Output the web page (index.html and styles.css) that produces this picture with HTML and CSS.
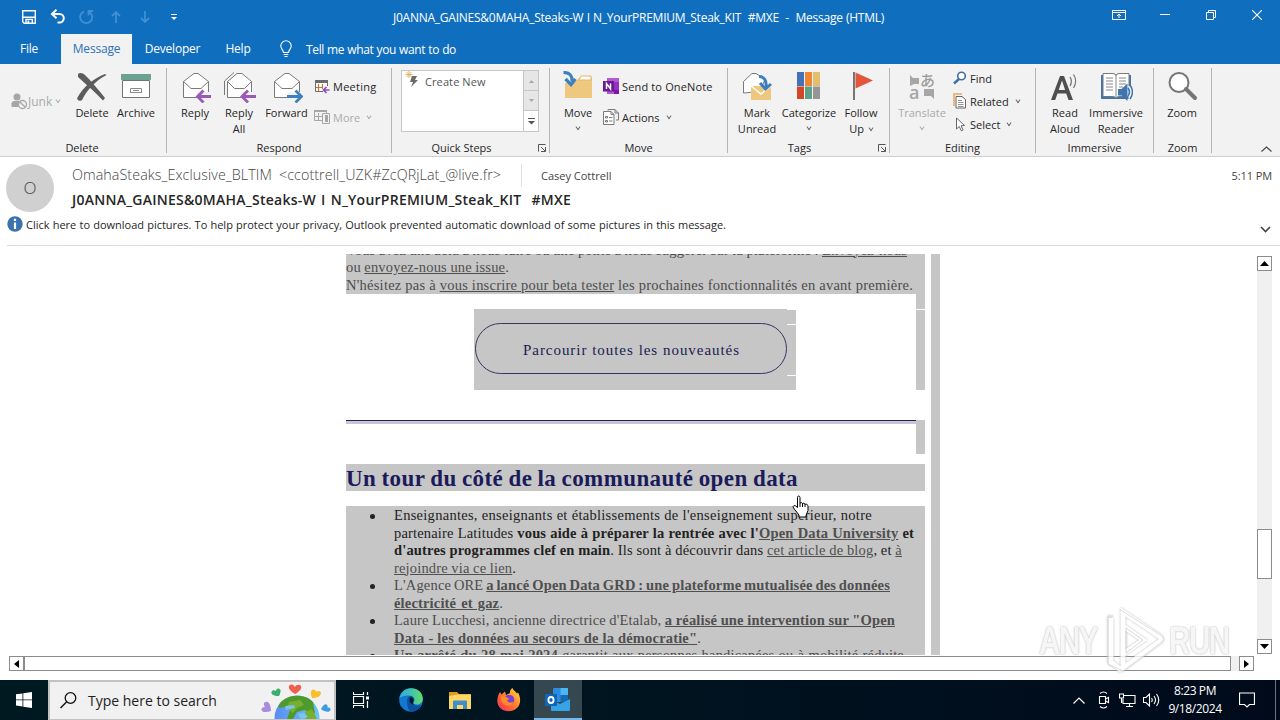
FILE: index.html
```html
<!doctype html>
<html lang="en">
  <head>
    <meta charset="UTF-8" />
    <title>J0ANNA_GAINES&amp;0MAHA_Steaks - Message (HTML)</title>
    <link rel="stylesheet" href="styles.css">
  </head>
  <body>
    <!-- Title bar -->
    <header class="titlebar">
      <div class="quick-access">
        <svg width="16" height="16" viewBox="0 0 16 16"><path d="M1.700 1.700h12.600v12.600H3.200l-1.500-1.500zM2 8.200h12M5 14v-3.600h6.300V14" fill="none" stroke="#fff" stroke-width="1.400" /><path d="M6.500 11.500h1.800V14H6.500z" fill="#fff" /></svg>
        <svg width="16" height="16" viewBox="0 0 16 16"><path d="M6.500 .8L2 5l4.500 4.200M2.300 5h7.200a4.300 4.300 0 0 1 0 8.600H7.500" fill="none" stroke="#fff" stroke-width="2" /></svg>
        <svg width="16" height="16" viewBox="0 0 16 16"><path d="M9 2h5M9.500 1.500v5M10 2.800A6 6 0 1 1 5 2.500" fill="none" stroke="#3f8fd2" stroke-width="1.900" /></svg>
        <svg width="16" height="16" viewBox="0 0 16 16"><path d="M8 14V3M4 7l4-4 4 4" fill="none" stroke="#3f8fd2" stroke-width="1.800" /></svg>
        <svg width="16" height="16" viewBox="0 0 16 16"><path d="M8 2v11M4 9l4 4 4-4" fill="none" stroke="#3f8fd2" stroke-width="1.800" /></svg>
        <svg width="16" height="16" viewBox="0 0 16 16"><path d="M5 5.500h6" stroke="#fff" /><path d="M5 8h6L8 11z" fill="#fff" /></svg>
      </div>
      <h1 class="window-title">J0ANNA_GAINES&amp;0MAHA_Steaks-W I N_YourPREMIUM_Steak_KIT&nbsp; #MXE&nbsp; -&nbsp; Message (HTML)</h1>
      <div class="window-controls">
        <svg width="14" height="12" viewBox="0 0 14 12"><path d="M.5 1.500h13v9H.5zM.5 3.500h13M7 9V5M5 7l2-2 2 2" fill="none" stroke="#fff" /></svg>
        <svg width="10" height="10" viewBox="0 0 10 10"><path d="M0 4.500h10" stroke="#fff" /></svg>
        <svg width="10" height="10" viewBox="0 0 10 10"><path d="M.5 2.500h7v7h-7zM2.500 2.500v-2h7v7h-2" fill="none" stroke="#fff" /></svg>
        <svg width="10" height="10" viewBox="0 0 10 10"><path d="M0 0l10 10M10 0L0 10" stroke="#fff" stroke-width="1.100" /></svg>
      </div>
    </header>

    <nav class="tabs">
      <span class="tab tab-file">File</span>
      <span class="tab tab-message is-active">Message</span>
      <span class="tab tab-developer">Developer</span>
      <span class="tab tab-help">Help</span>
      <svg class="bulb" width="12" height="18" viewBox="0 0 12 18"><path d="M3.500 12.500c0-2.500-2.700-3.500-2.700-6.500a5.200 5.200 0 0 1 10.400 0c0 3-2.700 4-2.700 6.500zM3.700 14.500h4.600M4.500 16.500h3" fill="none" stroke="#fff" stroke-width="1.100" /></svg>
      <span class="tell-me">Tell me what you want to do</span>
    </nav>

    <!-- Ribbon -->
    <div class="ribbon">
      <section class="group group-delete">
        <div class="group-body">
          <div class="junk is-disabled">
            <svg width="17" height="17" viewBox="0 0 17 17"><circle cx="6" cy="4" r="3.500" fill="#a6a6a6" /><path d="M.5 14V11a3 3 0 0 1 3-3h4.500v6z" fill="#a6a6a6" /><circle cx="11.500" cy="11.500" r="4" fill="#f2f2f2" stroke="#a6a6a6" stroke-width="1.300" /><path d="M8.700 8.700l5.600 5.600" stroke="#a6a6a6" stroke-width="1.300" /></svg>
            <span>Junk</span><i class="caret"></i>
          </div>
          <div class="big">
            <svg width="32" height="32" viewBox="0 0 32 32"><path d="M2 3c2-2 5-1 7 1 6 6 13 14 20 23l-2 2.500C20 22 12 15 2 6z" fill="#5c5c5c" /><path d="M30.500 4C21 9 12 17 6 29c-1.500 2-6 0-4.500-2.500C7 16 18 7 29 3z" fill="#5c5c5c" /></svg>
            <span>Delete</span>
          </div>
          <div class="big">
            <svg width="32" height="32" viewBox="0 0 32 32"><path d="M2.500 9.500h27v17h-27z" fill="#fff" stroke="#737373" /><path d="M1 3h30v6H1z" fill="#6ba292" /><path d="M10.500 17.500h11v4h-11z" fill="#fff" stroke="#8a8a8a" /><path d="M13 19.500h6" stroke="#8a8a8a" /></svg>
            <span>Archive</span>
          </div>
        </div>
        <h2>Delete</h2>
      </section>

      <section class="group group-respond">
        <div class="group-body">
          <div class="big">
            <svg width="32" height="32" viewBox="0 0 32 32"><path d="M4.500 10.500L15 2.500h4l10.500 8v16h-25z" fill="#fff" stroke="#7a7a7a" /><path d="M4.500 10.500l7.500 7h10l7.500-7" fill="none" stroke="#7a7a7a" /><path d="M18 21h13v7H18z" fill="#f2f2f2" /><path d="M32 25.500H19M24.500 19.500l-6 6 6 6" fill="none" stroke="#9b59b6" stroke-width="2.800" /></svg>
            <span>Reply</span>
          </div>
          <div class="big">
            <svg width="34" height="32" viewBox="0 0 34 32"><path d="M2.500 24V10L12 1.500" fill="none" stroke="#7a7a7a" /><path d="M5.500 10.500L15 2.500h5l9.500 8v16h-24z" fill="#fff" stroke="#7a7a7a" /><path d="M5.500 10.500l7 7h10l7-7" fill="none" stroke="#7a7a7a" /><path d="M19 21h13v7H19z" fill="#f2f2f2" /><path d="M34 25.500H21M26 19.500l-6 6 6 6" fill="none" stroke="#9b59b6" stroke-width="2.800" /></svg>
            <span>Reply<br>All</span>
          </div>
          <div class="big big-forward">
            <svg width="32" height="32" viewBox="0 0 32 32"><path d="M3.500 10.500L14 2.500h4l10.500 8v16h-25z" fill="#fff" stroke="#7a7a7a" /><path d="M3.500 10.500l7.500 7h10l7.500-7" fill="none" stroke="#7a7a7a" /><path d="M17 21h14v7H17z" fill="#f2f2f2" /><path d="M16 25.500h13M24.500 19.500l6 6-6 6" fill="none" stroke="#3e7fc0" stroke-width="2.800" /></svg>
            <span>Forward</span>
          </div>
          <div class="small-col">
            <div class="small">
              <svg width="16" height="16" viewBox="0 0 16 16"><path d="M1.500 2.500h12v11h-12z" fill="#fff" stroke="#6b6b6b" /><path d="M1 2h13v3H1z" fill="#6b6b6b" /><path d="M4.500 6v7M8.500 6v5M2 9.500h9" stroke="#c87533" stroke-width="1.200" /><path d="M9 8h7v7H9z" fill="#f2f2f2" /><path d="M15.500 12H9.500M12.500 9l-3 3 3 3" fill="none" stroke="#8e4fb0" stroke-width="1.700" /></svg>
              <span class="t-meeting">Meeting</span>
            </div>
            <div class="small is-disabled">
              <svg width="16" height="16" viewBox="0 0 16 16"><path d="M.5 1.500h12v10H.5z" fill="none" stroke="#a6a6a6" /><path d="M0 1h13v2H0zM4 4h1v8H4zM1 7h7v1H1z" fill="#a6a6a6" /><path d="M8.500 4.500h7v10h-7z" fill="#f2f2f2" stroke="#a6a6a6" /><path d="M11 6h3v7h-3z" fill="#a6a6a6" /></svg>
              <span>More</span><i class="caret"></i>
            </div>
          </div>
        </div>
        <h2>Respond</h2>
      </section>

      <section class="group group-steps">
        <div class="group-body">
          <div class="steps">
            <div class="steps-list">
              <svg width="16" height="18" viewBox="0 0 16 18"><path d="M4 0v7M.5 3.500h7M1.500 1l5 5M6.500 1l-5 5" stroke="#e3b26a" /><path d="M7 5h5l-2 4h3l-7 7 2-5H5z" fill="#6b6b6b" /></svg>
              <span>Create New</span>
            </div>
            <div class="steps-scroll">
              <b><svg width="7" height="4"><path d="M1 4l2.500-3L6 4z" fill="#a8a8a8" /></svg></b>
              <b><svg width="7" height="4"><path d="M1 0l2.500 3L6 0z" fill="#a8a8a8" /></svg></b>
              <b class="is-open"><svg width="7" height="7"><path d="M0 .5h7" stroke="#555" /><path d="M0 3h7L3.500 6.500z" fill="#555" /></svg></b>
            </div>
          </div>
        </div>
        <h2>Quick Steps</h2>
        <svg class="launcher" width="8" height="8" viewBox="0 0 8 8"><path d="M.5 7.500v-7h7M3 3l4 4M7.500 3v4.500H3" fill="none" stroke="#555" /></svg>
      </section>

      <section class="group group-move">
        <div class="group-body">
          <div class="big">
            <svg width="32" height="32" viewBox="0 0 32 32"><path d="M3 27V12h9l6-6h12v21z" fill="#edc87e" /><path d="M17 9l2-4h10v4z" fill="#fff" stroke="#e3b566" /><path d="M1.500 1.500c6 0 9 3 8.500 9M3.500 8l5.500 5.500L13.500 8" fill="none" stroke="#3e7fc0" stroke-width="3.200" /></svg>
            <span>Move</span><i class="caret"></i>
          </div>
          <div class="small-col">
            <div class="small">
              <svg width="16" height="16" viewBox="0 0 16 16"><path d="M4 0h12v16H4z" fill="#b15bd0" /><path d="M11 4h5v8h-5z" fill="#9332bf" /><path d="M11 12h5v4h-5z" fill="#7719aa" /><path d="M0 3h11v10.500H0z" fill="#6b1796" /><path d="M3.500 11V5.500L7.500 11V5.500" fill="none" stroke="#fff" stroke-width="1.500" /></svg>
              <span class="t-onenote">Send to OneNote</span>
            </div>
            <div class="small">
              <svg width="16" height="16" viewBox="0 0 16 16"><path d="M5 1.500V.5h7l3.500 3.500v7H13M12 .5V4h3.500" fill="none" stroke="#7a7a7a" /><path d="M.5 2.500H8l3 3v10H.5z" fill="#fff" stroke="#7a7a7a" /><path d="M8 2.500v3h3M2.500 7.500h2v1.500h-2zM6 8.500h3.500M2.500 11.500h2v1.500h-2zM6 12h3.500" fill="none" stroke="#7a7a7a" /></svg>
              <span class="t-actions">Actions</span><i class="caret"></i>
            </div>
          </div>
        </div>
        <h2>Move</h2>
      </section>

      <section class="group group-tags">
        <div class="group-body">
          <div class="big">
            <svg width="32" height="32" viewBox="0 0 32 32"><path d="M2.500 22V10.500L11 2.500h4l9 6-3 7-12 6z" fill="#fff" stroke="#7a7a7a" /><path d="M10 15h20v14H10z" fill="#edc87e" /><path d="M10 15l10 8 10-8" fill="none" stroke="#fff" stroke-width="1.400" /><path d="M18 5.500c5 0 8 4 7 11M19 12l5.500 6L30 13" fill="none" stroke="#3e7fc0" stroke-width="3" /></svg>
            <span>Mark<br>Unread</span>
          </div>
          <div class="big big-categorize">
            <svg width="32" height="32" viewBox="0 0 32 32"><path d="M4 1h7v14H4z" fill="#4472b8" /><path d="M12 1h7v14h-7z" fill="#ed8733" /><path d="M20 1h7v14h-7z" fill="#e4bd6d" /><path d="M4 15.500h7V28H4z" fill="#d24726" /><path d="M12 15.500h7V28h-7z" fill="#5ea189" /><path d="M20 15.500h7V28h-7z" fill="#959595" /></svg>
            <span>Categorize</span><i class="caret"></i>
          </div>
          <div class="big">
            <svg width="32" height="32" viewBox="0 0 32 32"><path d="M9 1v28" stroke="#767676" stroke-width="2" /><path d="M10.500 1.500L28 9.500l-17.500 8z" fill="#e2573b" /></svg>
            <span>Follow<br>Up <i class="caret"></i></span>
          </div>
        </div>
        <h2>Tags</h2>
        <svg class="launcher" width="8" height="8" viewBox="0 0 8 8"><path d="M.5 7.500v-7h7M3 3l4 4M7.500 3v4.500H3" fill="none" stroke="#555" /></svg>
      </section>

      <section class="group group-editing">
        <div class="group-body">
          <div class="big big-translate is-disabled">
            <svg class="translate-icon" width="32" height="32" viewBox="0 0 32 32"><path d="M4 4l3 3h6v6H8l-4 2zM28 28l-3-3h-7v-7h10z" fill="#a6a6a6" /><text x="14" y="15" class="glyph-ja">あ</text><text x="3" y="28" class="glyph-a">a</text></svg>
            <span>Translate</span><i class="caret"></i>
          </div>
          <div class="small-col small-col-3">
            <div class="small">
              <svg width="14" height="14" viewBox="0 0 14 14"><circle cx="8.500" cy="5" r="3.800" fill="#fff" stroke="#3e6fa8" stroke-width="1.600" /><path d="M6 8l-5 4.500" stroke="#3e6fa8" stroke-width="2.400" /></svg>
              <span>Find</span>
            </div>
            <div class="small">
              <svg width="14" height="16" viewBox="0 0 14 16"><path d="M1 13V1h8" fill="none" stroke="#e9a95a" stroke-width="1.500" /><path d="M3 3.500h6l3.500 3V15H3z" fill="#fff" stroke="#666" /><path d="M5 7.500h4M5 9.500h5.500M5 11.500h5.500M5 13.500h5.500" stroke="#777" stroke-width=".8" /></svg>
              <span>Related</span><i class="caret"></i>
            </div>
            <div class="small">
              <svg width="14" height="15" viewBox="0 0 14 15"><path d="M3.500 1v11l2.800-2.500 2 4.300 1.800-.8-2-4.200 3.400-.3z" fill="#fff" stroke="#666" /></svg>
              <span>Select</span><i class="caret"></i>
            </div>
          </div>
        </div>
        <h2>Editing</h2>
      </section>

      <section class="group group-immersive">
        <div class="group-body">
          <div class="big">
            <svg width="32" height="32" viewBox="0 0 32 32"><path d="M2 29L11 5h4l9 24h-4.500l-2.300-6.500H8.500L6.200 29zM9.700 19h6.400L13 9.500z" fill="#4f4f4f" /><path d="M21 6c1.700 2.500 1.700 6 0 9M24.500 3.500c2.700 4 2.700 9.500 0 13.500" fill="none" stroke="#777" stroke-width="1.300" /></svg>
            <span>Read<br>Aloud</span>
          </div>
          <div class="big big-immersive">
            <svg width="34" height="32" viewBox="0 0 34 32"><path d="M2 4h30v24H2z" fill="#3f76b0" /><path d="M4 2.500h9q4 0 4 2 0-2 4-2h9v23h-9q-4 0-4 2 0-2-4-2H4z" fill="#fff" stroke="#777" /><path d="M17 4v23M7 7h7M7 10h7M7 13h7M7 16h7M7 19h7M20 7h7M20 10h7M20 13h7M20 16h4" stroke="#888" /><path d="M19 18h3.500l6-5.500V30l-6-5.500H19z" fill="#3f76b0" /><path d="M29.500 15h4.500v13h-4.500z" fill="#f2f2f2" /><path d="M29 17q3 4 0 8M31 14q5 7 0 14" fill="none" stroke="#3f76b0" stroke-width="1.500" /></svg>
            <span>Immersive<br>Reader</span>
          </div>
        </div>
        <h2>Immersive</h2>
      </section>

      <section class="group group-zoom">
        <div class="group-body">
          <div class="big">
            <svg width="32" height="32" viewBox="0 0 32 32"><circle cx="13" cy="11.500" r="9.500" fill="#fff" stroke="#767676" stroke-width="2" /><path d="M20 18l9 9" stroke="#767676" stroke-width="4" stroke-linecap="round" /></svg>
            <span>Zoom</span>
          </div>
        </div>
        <h2>Zoom</h2>
      </section>

      <svg class="collapse" width="11" height="6" viewBox="0 0 11 6"><path d="M.5 5.500l5-4.500 5 4.500" fill="none" stroke="#444" stroke-width="1.100" /></svg>
    </div>

    <!-- Message header -->
    <section class="message-head">
      <div class="avatar">O</div>
      <div class="message-meta">
        <div class="from-row">
          <span class="sender">OmahaSteaks_Exclusive_BLTIM &lt;ccottrell_UZK#ZcQRjLat_@live.fr&gt;</span>
          <span class="recipient">Casey Cottrell</span>
          <span class="time">5:11 PM</span>
        </div>
        <div class="subject">J0ANNA_GAINES&amp;0MAHA_Steaks-W I N_YourPREMIUM_Steak_KIT&nbsp; #MXE</div>
      </div>
    </section>
    <div class="infobar">
      <svg width="16" height="16" viewBox="0 0 16 16"><circle cx="8" cy="8" r="7.700" fill="#3b73af" /><path d="M8 2.800v2.200M8 6.500v6.500" stroke="#fff" stroke-width="2.200" /></svg>
      <span class="info-text">Click here to download pictures. To help protect your privacy, Outlook prevented automatic download of some pictures in this message.</span>
      <svg class="expand" width="11" height="7" viewBox="0 0 11 7"><path d="M1 1l4.500 4.500L10 1" fill="none" stroke="#444" stroke-width="1.600" /></svg>
    </div>

    <!-- Reading pane -->
    <main class="reading">
      <div class="viewport">
        <article class="mail">
          <div class="intro">
            <p class="line w-561">Vous avez une actu à nous faire ou une petite à nous suggérer sur la plateforme : <a>Envoyez-nous</a></p>
            <p class="line w-163">ou <a>envoyez-nous une issue</a>.</p>
            <p class="line w-567">N'hésitez pas à <a>vous inscrire pour beta tester</a> les prochaines fonctionnalités en avant première.</p>
          </div>

          <div class="cta-row">
            <div class="cta-cell">
              <div class="cta-main"><a class="cta">Parcourir toutes les nouveautés</a></div>
              <div class="cta-edge"></div>
            </div>
            <div class="row-edge"></div>
          </div>

          <div class="rule-row">
            <div class="rule"></div>
            <div class="rule-edge"></div>
          </div>

          <h2 class="section-title"><span>Un tour du côté de la communauté open data</span></h2>

          <ul class="news">
            <li>
              <p class="line w-478">Enseignantes, enseignants et établissements de l'enseignement supérieur, notre</p>
              <p class="line w-520">partenaire Latitudes <b>vous aide à préparer la rentrée avec l'<a>Open Data University</a> et</b></p>
              <p class="line w-508"><b>d'autres programmes clef en main</b>. Ils sont à découvrir dans <a>cet article de blog</a>, et <a>à</a></p>
              <p class="line w-122"><a>rejoindre via ce lien</a>.</p>
            </li>
            <li class="is-dim">
              <p class="line w-496">L'Agence ORE <b><a>a lancé Open Data GRD : une plateforme mutualisée des données</a></b></p>
              <p class="line w-109"><b><a>électricité et gaz</a></b>.</p>
            </li>
            <li class="is-dim">
              <p class="line w-501">Laure Lucchesi, ancienne directrice d'Etalab, <b><a>a réalisé une intervention sur "Open</a></b></p>
              <p class="line w-307"><b><a>Data - les données au secours de la démocratie"</a></b>.</p>
            </li>
            <li class="is-dim">
              <p class="line w-510"><b><a>Un arrêté du 28 mai 2024</a></b> garantit aux personnes handicapées ou à mobilité réduite</p>
            </li>
          </ul>
        </article>
        <div class="mail-edge"></div>
        <div class="vscroll">
          <b class="scroll-btn"><svg width="9" height="5"><path d="M0 5l4.500-5L9 5z" /></svg></b>
          <div class="vthumb"></div>
          <b class="scroll-btn"><svg width="9" height="5"><path d="M0 0l4.500 5L9 0z" /></svg></b>
        </div>
      </div>
      <div class="hscroll">
        <b class="scroll-btn"><svg width="5" height="8"><path d="M5 0L0 4l5 4z" /></svg></b>
        <div class="hthumb"></div>
        <b class="scroll-btn"><svg width="5" height="8"><path d="M0 0l5 4-5 4z" /></svg></b>
      </div>
    </main>

    <!-- Taskbar -->
    <footer class="taskbar">
      <div class="start">
        <svg width="16" height="16" viewBox="0 0 16 16"><path d="M0 2.300L6.500 1.400v6.100H0zM7.300 1.300L16 0v7.500H7.300zM0 8.300h6.500v6.200L0 13.600zM7.300 8.300H16V16l-8.700-1.300z" fill="#fff" /></svg>
      </div>
      <div class="search">
        <svg class="search-icon" width="17" height="17" viewBox="0 0 17 17"><circle cx="10.500" cy="6" r="5.300" fill="none" stroke="#111" stroke-width="1.300" /><path d="M6.500 10L.5 16" stroke="#111" stroke-width="1.400" /></svg>
        <span>Type here to search</span>
        <svg class="globe" width="70" height="37" viewBox="0 0 70 37">
          <defs><linearGradient id="sea" x1="0" x2="1"><stop offset="0" stop-color="#5b8cf0" /><stop offset="1" stop-color="#6cc5f5" /></linearGradient></defs>
          <circle cx="36" cy="36" r="22.500" fill="url(#sea)" />
          <path d="M21 19c8-7 24-7 31 1l2 11-5 2-5-5-8 2-4 7h-6l3-9-6-3-4 1c-3-1 0-5 2-7z" fill="#4f9a2c" />
          <path d="M28 20l11-2 4 5-7 3-4 5-6-5zM44 30l7-3 5 10H45z" fill="#78ae32" />
          <path d="M24 24l9-1 1 3-9 2zM37 32l6-1 4 4-7 2z" fill="#78c5f2" />
          <path d="M34 12c-7-4-7-8-5-9 2-1 4 0 5 2 1-2 4-3 5.500-1.500C42 6 38 10 34 12z" fill="#f0604d" />
          <path d="M18 14c-6 0-8-2-7.500-4 .5-2 3-2 4.500-1 0-2 2-3 3.500-2 2 1 1 4-.5 7z" fill="#3fae6a" />
          <path d="M51 16c-2-6-1-8 1-8.500 2 0 3 1 3 2.500 2-2 5-1 5 1 0 3-4 5-9 5z" fill="#fdbe2c" />
          <path d="M10 29c-6 2-9 1-9.500-1C0 26 2 25 4 25c-2-3-1-5 1-5 3-1 5 4 5 9z" fill="#a98bdc" />
          <path d="M60 27c2-4 5-6 6-4 1 1 1 2 0 3 2-1 4 0 3.500 2-1 3-6 2-9.500-1z" fill="#3d9be0" />
        </svg>
      </div>
      <div class="task-icon task-view">
        <svg width="17" height="16" viewBox="0 0 17 16"><path d="M.5 0v2.500h10V0M.5 16v-2.500h10V16M.5 4.500h10v7H.5zM14.500 0v3M14.500 9v7" fill="none" stroke="#fff" stroke-width="1.200" /><path d="M13 4.500h3v3h-3z" fill="#fff" /></svg>
      </div>
      <div class="task-icon">
        <svg width="24" height="24" viewBox="0 0 24 24">
          <defs>
            <linearGradient id="edge-a" x1="0" x2="1"><stop offset="0" stop-color="#2aa9e6" /><stop offset="1" stop-color="#5fdc6c" /></linearGradient>
          </defs>
          <circle cx="12" cy="12" r="11.800" fill="#1278d0" />
          <path d="M.3 11C1 4 6.500.2 12 .2 19 .2 23.800 5 23.800 10.500c0 4-3 6-6 6-2.500 0-4-1-3-2.500 2-3-.5-6.500-4.500-6.500C5 7.500 1 9 .3 11z" fill="url(#edge-a)" />
          <path d="M8 13c0-3 1.500-5 4-5 3 1 4 4 2.200 6.500-.8 2 1 3 3.800 3 2 0 3-.4 4.500-1.500C20 22 15 24 12 23.800 9 22 8 17 8 13z" fill="#0c4f9c" />
          <path d="M11 9.500c2.500-.5 4.500 2 3 4.500-.8 1.200 0 2.300 2 2.500-4 .5-6.500-3-5-7z" fill="#03172a" />
        </svg>
      </div>
      <div class="task-icon">
        <svg width="22" height="19" viewBox="0 0 22 19"><path d="M0 1h8l2 2h12v4H0z" fill="#e39a1b" /><path d="M0 5l9-1.500h13V18H0z" fill="#fdd667" /><path d="M4 18v-7.500q0-1 1-1h12q1 0 1 1V18h-4v-4H8v4z" fill="#3f8ec9" /></svg>
      </div>
      <div class="task-icon">
        <svg width="24" height="24" viewBox="0 0 24 24">
          <defs><linearGradient id="fox" x1="1" y1="0" x2="0" y2="1"><stop offset="0" stop-color="#ffe23e" /><stop offset=".5" stop-color="#ff7a2b" /><stop offset="1" stop-color="#f4235f" /></linearGradient></defs>
          <path d="M3 4l1.500 2.500L8 3.500 9 7l4-2c-.5-2 1-4 2.500-5 .5 2.500 3 3 4.500 5.500l1-1c3 5 3 12-1 15.500C13 26.500 0 23 .3 12.500.5 9 1.500 6 3 4z" fill="url(#fox)" />
          <path d="M7 12c0-3 2-5 5-5 4 0 6 3 5 6.500-1 3.500-7 4.500-9 1z" fill="#7a41d8" />
          <path d="M4 9c3-1.500 5 0 6.500 1l2 .5-2.500 2c2 3 5 2 6.500 1-1 4-6 5-9 3C4 14 4 11 4 9z" fill="#ff8a2a" />
        </svg>
      </div>
      <div class="task-icon is-running">
        <svg width="26" height="23" viewBox="0 0 26 23"><path d="M8 1q0-1 1-1h13q1 0 1 1v13H8z" fill="#2a8ddd" /><path d="M15.500 0h7.500v7h-7.500z" fill="#4db5f0" /><path d="M15.500 7h7.500v7h-7.500z" fill="#1868b5" /><path d="M6 12l9 4 10-5v11q0 1-1 1H7q-1 0-1-1z" fill="#35a3e6" /><path d="M0 6h12v12H0z" fill="#0f65b8" /><ellipse cx="6" cy="12" rx="2.600" ry="3" fill="none" stroke="#fff" stroke-width="1.800" /></svg>
      </div>

      <div class="tray">
        <svg class="tray-up" width="12" height="7" viewBox="0 0 12 7"><path d="M.5 6.500L6 1l5.500 5.500" fill="none" stroke="#fff" stroke-width="1.200" /></svg>
        <svg class="tray-meet" width="12" height="18" viewBox="0 0 12 18"><path d="M1.500 5.500h6v7h-6zM7.500 8l3-1.500v5l-3-1.500M2 2.500q3.500-3 7 0M2 15.500q3.500 3 7 0" fill="none" stroke="#fff" stroke-width="1.100" /></svg>
        <svg class="tray-net" width="17" height="15" viewBox="0 0 17 15"><path d="M5 2.500h11v8H4V6M7 13.500h7M10.500 10.500v3M.5 1h4v4h-4zM2.500 5v5" fill="none" stroke="#fff" stroke-width="1.100" /></svg>
        <svg class="tray-vol" width="17" height="14" viewBox="0 0 17 14"><path d="M.5 4.500H3l3.500-3.500v12L3 9.500H.5zM8.500 5q1.500 2 0 4M11 3q3 4 0 8M13.500 1q4.500 6 0 12" fill="none" stroke="#fff" stroke-width="1.100" /></svg>
        <div class="clock"><span>8:23 PM</span><span>9/18/2024</span></div>
        <svg class="tray-note" width="16" height="16" viewBox="0 0 16 16"><path d="M.5 1h15v11.500h-5L8 15l-2.500-2.500h-5z" fill="none" stroke="#fff" stroke-width="1.200" /></svg>
        <div class="peek"></div>
      </div>
    </footer>

    <!-- Watermark -->
    <div class="watermark">
      <span>ANY</span>
      <svg width="58" height="66" viewBox="0 0 58 66"><path d="M16 4l36 24q4 3 0 6L16 60zM16 18v28l20-14zM4 10v44l10 8" fill="none" stroke="#fff" stroke-width="5" /><path d="M13 1.500L55 28q3 3 0 6L16 63 1 56V8h5" fill="none" stroke="#d5d5d5" /><path d="M19 20l17 12-17 13z" fill="none" stroke="#d0d0d0" /></svg>
      <span>RUN</span>
    </div>

    <svg class="cursor" width="18" height="23" viewBox="0 0 18 23"><path d="M5.500 12.500V2.500q0-1.500 1.200-1.500T8 2.500V8q1.500-1 2.500.5 1.500-.8 2.500.7 2-.5 3 1.300v5l-2 5v1.500H7V20l-5.500-7q-1-2 .5-2.500 1.500 0 3.500 2z" fill="#fff" stroke="#000" /><path d="M8 8v4M10.500 8.500V12M13 9.200V12" stroke="#000" /></svg>
  </body>
</html>
```
FILE: styles.css
```css
* {
  box-sizing: border-box;
}

body {
  margin: 0;
  width: 1280px;
  height: 720px;
  overflow: hidden;
  position: relative;
  background: #fff;
  color: #262626;
  font-family: "Open Sans", "Noto Sans", sans-serif;
  font-size: 11px;
}

h1,
h2,
p,
ul {
  margin: 0;
  padding: 0;
  font-weight: normal;
}

svg {
  display: block;
  flex: none;
}

/* Title bar */
.titlebar {
  display: flex;
  height: 34px;
  background: #106ebe;
  color: #fff;
}

.quick-access {
  display: flex;
  align-items: center;
  padding-left: 15px;
}

.quick-access svg {
  margin: 0 7px 0 6px;
}

.window-title {
  width: 491px;
  margin-left: 204px;
  font-size: 12px;
  line-height: 35px;
  white-space: nowrap;
  text-align-last: justify;
  letter-spacing: -0.25px;
}

.window-controls {
  display: flex;
  align-items: center;
  height: 30px;
  margin-left: auto;
}

.window-controls svg {
  margin: 0 18px;
}

.window-controls svg:first-child {
  margin: 0 16px;
}

/* Tabs */
.tabs {
  display: flex;
  align-items: center;
  height: 30px;
  background: #106ebe;
  color: #fff;
  font-size: 12px;
}

.tab {
  line-height: 30px;
  text-align: center;
  letter-spacing: -0.2px;
}

.tab-file {
  width: 61px;
  padding-right: 3px;
}

.tab-message {
  width: 71px;
}

.tab-developer {
  width: 81px;
}

.tab-help {
  width: 50px;
}

.tab.is-active {
  background: #f2f2f2;
  color: #2b71b8;
}

.bulb {
  margin-left: 17px;
}

.tell-me {
  width: 150px;
  margin-left: 14px;
  white-space: nowrap;
  text-align-last: justify;
  letter-spacing: -0.35px;
}

/* Ribbon */
.ribbon {
  display: flex;
  height: 93px;
  background: #f2f2f2;
  border-bottom: 1px solid #cfcfcf;
  position: relative;
}

.group {
  height: 85px;
  margin-top: 4px;
  border-right: 1px solid #b4b4b4;
  position: relative;
}

.group-body {
  display: flex;
  height: 72px;
  padding-left: 6px;
}

.group h2 {
  font-size: 11px;
  line-height: 15px;
  text-align: center;
}

.group-delete { width: 167px; }
.group-respond { width: 225px; }
.group-steps { width: 158px; }
.group-move { width: 178px; }
.group-tags { width: 162px; }
.group-editing { width: 146px; }
.group-immersive { width: 118px; }
.group-zoom { width: 58px; }

.group-delete h2 {
  padding-right: 2px;
}

.group-steps h2 {
  padding-right: 18px;
}

.group-tags h2 {
  padding-right: 18px;
}

.group-tags .group-body,
.group-editing .group-body,
.group-immersive .group-body {
  padding-left: 7px;
}

.big {
  display: flex;
  flex-direction: column;
  align-items: center;
  width: 44px;
  padding-top: 3px;
  line-height: 16px;
  text-align: center;
  white-space: nowrap;
}

.big > span {
  margin-top: 2px;
}

.big > .caret {
  margin: 4px 0 0;
}

.big-forward { width: 51px; }
.big-categorize { width: 60px; }
.big-translate { width: 50px; }
.big-immersive { width: 58px; }

.caret {
  display: inline-block;
  width: 4px;
  height: 4px;
  margin: 0 1px 2px 4px;
  border: solid #666;
  border-width: 0 1px 1px 0;
  transform: rotate(45deg) skew(8deg, 8deg);
}

.big span .caret {
  margin: 0 0 3px 2px;
}

.is-disabled {
  color: #aaa;
}

.is-disabled .caret {
  border-color: #aaa;
}

.junk {
  display: flex;
  align-items: center;
  width: 64px;
  height: 66px;
  padding-left: 5px;
  font-size: 12px;
}

.small-col {
  display: flex;
  flex-direction: column;
  gap: 15px;
  padding: 10px 0 0 3px;
}

.group-respond .small-col {
  padding-left: 2px;
}

.small-col-3 {
  gap: 7px;
  padding: 2px 0 0 6px;
}

.small {
  display: flex;
  align-items: center;
  gap: 3px;
  height: 16px;
  white-space: nowrap;
}

.t-meeting { letter-spacing: 0.25px; }
.t-onenote { letter-spacing: 0.15px; }

.translate-icon {
  overflow: visible;
}

.glyph-ja {
  font: 500 15px "Noto Sans CJK JP", sans-serif;
  fill: #9c9c9c;
}

.glyph-a {
  font: 600 18px "Open Sans", sans-serif;
  fill: #a6a6a6;
}

.steps {
  display: flex;
  width: 138px;
  height: 62px;
  margin: 2px 0 0 3px;
  border: 1px solid #c6c6c6;
  background: #fff;
}

.steps-list {
  display: flex;
  flex: 1;
  gap: 4px;
  padding-left: 3px;
  color: #555;
  line-height: 22px;
  letter-spacing: 0.1px;
}

.steps-scroll {
  width: 15px;
  border-left: 1px solid #c6c6c6;
}

.steps-scroll b {
  display: grid;
  place-items: center;
  height: 20px;
  background: #e6e6e6;
  border-bottom: 1px solid #c6c6c6;
}

.steps-scroll .is-open {
  background: #fff;
  border-bottom: none;
}

.launcher {
  position: absolute;
  right: 3px;
  bottom: 1px;
}

.collapse {
  position: absolute;
  right: 8px;
  bottom: 4px;
}

/* Message header */
.message-head {
  display: flex;
  height: 56px;
  padding: 7px 8px 0 6px;
}

.avatar {
  width: 48px;
  height: 48px;
  border-radius: 50%;
  background: #d0d0d0;
  color: #444;
  font-size: 17px;
  font-weight: 300;
  line-height: 48px;
  text-align: center;
}

.message-meta {
  flex: 1;
  margin-left: 18px;
}

.from-row {
  display: flex;
  align-items: center;
  height: 22px;
  color: #444;
  white-space: nowrap;
}

.sender {
  width: 429px;
  margin-top: -2px;
  font-size: 14.3px;
  font-weight: 300;
  text-align-last: justify;
  letter-spacing: 0.07px;
}

.recipient {
  margin-left: 20px;
  padding-left: 19px;
  border-left: 1px solid #e0e0e0;
  line-height: 23px;
}

.time {
  margin-left: auto;
  letter-spacing: -0.1px;
}

.subject {
  width: 499px;
  margin-top: 4px;
  font-size: 14px;
  font-weight: 600;
  line-height: 20px;
  white-space: nowrap;
  text-align-last: justify;
  letter-spacing: 0.25px;
}

.infobar {
  display: flex;
  align-items: center;
  height: 33px;
  margin-left: 7px;
  padding: 0 9px 10px 0;
  border-bottom: 1px solid #dcdcdc;
}

.info-text {
  width: 700px;
  margin-left: 3px;
  white-space: nowrap;
  text-align-last: justify;
}

.expand {
  margin: 11px 0 0 auto;
}

/* Reading pane */
.reading {
  height: 434px;
  padding-top: 8px;
}

.viewport {
  display: flex;
  height: 402px;
  padding: 0 8px 0 346px;
}

.mail {
  width: 579px;
  height: 401px;
  overflow: hidden;
  color: #4c4c4c;
  font-family: "Liberation Serif", serif;
  font-size: 14.5px;
  line-height: 17.5px;
}

.mail a {
  text-decoration: underline;
  color: #4f4f4f;
}

.line {
  white-space: nowrap;
  text-align-last: justify;
  letter-spacing: 0.17px;
  word-spacing: -1.5px;
}

.w-109 { width: 109px; }
.w-122 { width: 122px; }
.w-163 { width: 163px; }
.w-307 { width: 307px; }
.w-478 { width: 478px; letter-spacing: 0.28px; }
.w-496 { width: 496px; }
.w-501 { width: 501px; }
.w-508 { width: 508px; }
.w-510 { width: 510px; }
.w-520 { width: 520px; }
.w-561 { width: 561px; }
.w-567 { width: 567px; letter-spacing: 0.24px; }

.intro {
  display: flex;
  flex-direction: column;
  justify-content: flex-end;
  height: 40px;
  background: #c6c6c6;
}

.cta-row {
  display: flex;
  justify-content: space-between;
  height: 96px;
  padding-left: 128px;
}

.cta-cell {
  display: flex;
  width: 322px;
  margin-top: 15px;
}

.cta-main {
  width: 313px;
  padding: 14px 0 0 1px;
  background: #c6c6c6;
}

.mail .cta {
  display: block;
  height: 51px;
  padding: 0 46px 0 47px;
  border: 1px solid #36365e;
  border-radius: 26px;
  color: #1b1b4f;
  font-size: 15px;
  line-height: 52px;
  white-space: nowrap;
  text-decoration: none;
  text-align-last: justify;
  letter-spacing: 0.95px;
  word-spacing: -2px;
}

.cta-edge {
  width: 9px;
  background: linear-gradient(#fff 1px, #c6c6c6 1px 15px, #fff 15px 16px, #c6c6c6 16px 66px, #fff 66px 67px, #c6c6c6 67px);
}

.row-edge {
  width: 9px;
  background: linear-gradient(#c6c6c6 15px, #fff 15px 16px, #c6c6c6 16px);
}

.rule-row {
  display: flex;
  height: 34px;
  margin-top: 30px;
}

.rule {
  width: 570px;
  height: 4px;
  border-top: 1px solid #23234a;
  background: #c9c6dc;
}

.rule-edge {
  width: 9px;
  background: #c6c6c6;
}

.section-title {
  height: 27px;
  margin-top: 10px;
  background: #c6c6c6;
  color: #1b1b5b;
  font-size: 23px;
  font-weight: bold;
  line-height: 29px;
}

.section-title span {
  display: block;
  width: 452px;
  white-space: nowrap;
  text-align-last: justify;
  letter-spacing: 0.4px;
  word-spacing: -3px;
}

.news {
  margin-top: 15px;
  padding: 1px 0 0 48px;
  height: 160px;
  background: #c6c6c6;
  color: #222;
  list-style: none;
}

.news li {
  position: relative;
}

.news li::before {
  content: "";
  position: absolute;
  left: -24px;
  top: 7px;
  width: 5px;
  height: 5px;
  border-radius: 50%;
  background: #222;
}

.news .is-dim {
  color: #4c4c4c;
}

.mail-edge {
  width: 9px;
  height: 401px;
  margin-left: 6px;
  background: #c6c6c6;
}

.scroll-btn {
  display: grid;
  place-items: center;
  width: 15px;
  height: 15px;
  border: 1px solid #8c8c8c;
  background: #fff;
}

.vscroll {
  display: flex;
  flex-direction: column;
  width: 15px;
  height: 398px;
  margin: 2px 0 0 auto;
  background: #f0f0f0;
}

.vthumb {
  height: 50px;
  margin: 258px 0 auto;
  border: 1px solid #8c8c8c;
  background: #fff;
}

.hscroll {
  display: flex;
  width: 1245px;
  height: 15px;
  margin-left: 9px;
  background: #f0f0f0;
}

.hthumb {
  width: 1207px;
  margin-right: auto;
  border: 1px solid #8c8c8c;
  background: #fff;
}

/* Taskbar */
.taskbar {
  display: flex;
  height: 40px;
  background: linear-gradient(90deg, #001820, #001420 50%, #000a1a);
  color: #fff;
}

.start {
  display: grid;
  place-items: center;
  width: 48px;
}

.search {
  display: flex;
  align-items: center;
  width: 288px;
  border: 2px solid #c2c2c2;
  border-bottom-width: 1px;
  background: #f1f1f1;
  color: #222;
  font-size: 14px;
}

.search-icon {
  margin-left: 10px;
}

.search span {
  width: 128px;
  margin-left: 11px;
  white-space: nowrap;
  text-align-last: justify;
}

.globe {
  margin-left: 45px;
}

.task-icon {
  display: grid;
  place-items: center;
  width: 49px;
}

.task-view {
  width: 50px;
}

.task-icon.is-running {
  width: 48px;
  margin-left: 1px;
  background: #35474f;
  border-bottom: 2px solid #76b9ed;
}

.tray {
  display: flex;
  align-items: center;
  margin-left: auto;
}

.tray-meet {
  margin-left: 13px;
}

.tray-net {
  margin-left: 9px;
}

.tray-vol {
  margin-left: 7px;
}

.clock {
  display: flex;
  flex-direction: column;
  align-items: center;
  width: 54px;
  margin-left: 8px;
  font-size: 12px;
  line-height: 18px;
  letter-spacing: -0.4px;
}

.tray-note {
  margin-left: 17px;
}

.peek {
  width: 5px;
  height: 40px;
  margin-left: 20px;
  border-left: 1px solid #6b737c;
}

/* Overlays */
.watermark {
  position: absolute;
  left: 1039px;
  top: 608px;
  display: flex;
  align-items: center;
  gap: 4px;
  opacity: 0.8;
  color: #f4f4f4;
  font: bold 39px "Liberation Sans", sans-serif;
  text-shadow: 0 0 2px #b0b0b0, 0 0 2px #c4c4c4;
}

.watermark span {
  width: 64px;
  letter-spacing: -2px;
  transform: scaleX(0.76);
  transform-origin: 0 0;
}

.watermark svg {
  filter: drop-shadow(0 0 1px #aaa);
}

.cursor {
  position: absolute;
  left: 792px;
  top: 495px;
}
```
